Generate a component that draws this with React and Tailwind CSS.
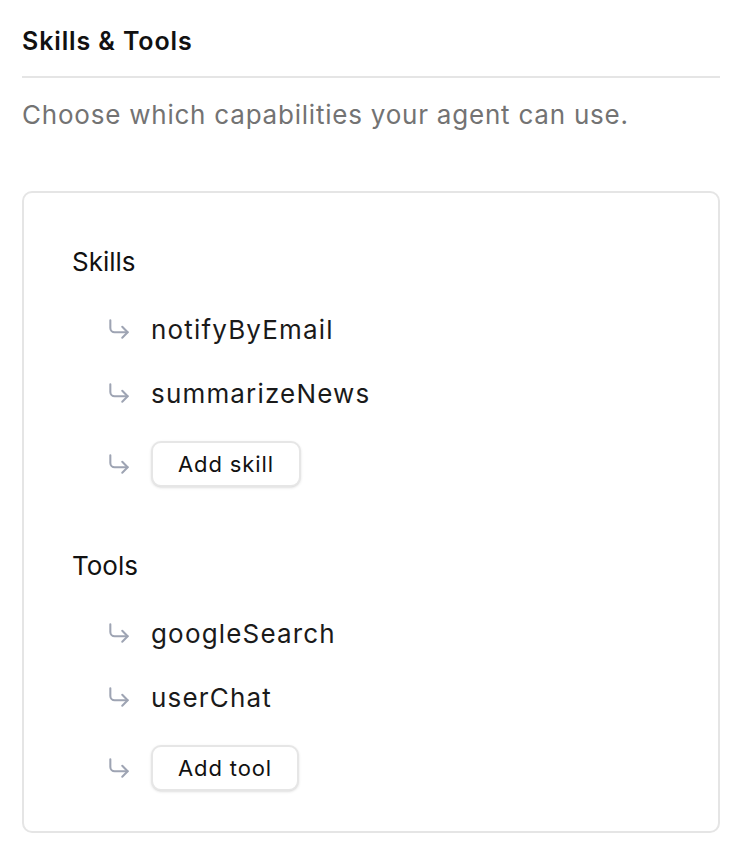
import React from "react";
import { CornerDownRight } from "lucide-react";

const sections = [
  { title: "Skills", items: ["notifyByEmail", "summarizeNews"], action: "Add skill" },
  { title: "Tools", items: ["googleSearch", "userChat"], action: "Add tool" },
];

const Arrow = () => (
  <CornerDownRight className="w-[26px] h-[26px] text-[#9ea4b3] shrink-0" strokeWidth={1.9} />
);

const Section = ({ title, items, action, className }) => (
  <div className={className}>
    <div className="h-[36px] leading-[36px] text-[26px] text-[#111]">{title}</div>
    <ul className="mt-[25px] pl-[34px]">
      {items.map((item, i) => (
        <li key={item} className={`flex items-center gap-[19px] h-[48px] ${i > 0 ? "mt-[16px]" : ""}`}>
          <Arrow />
          <span className="text-[26px] tracking-[0.045em] text-[#1a1a1a]">{item}</span>
        </li>
      ))}
      <li className="flex items-center gap-[19px] h-[46px] mt-[24px]">
        <Arrow />
        <button className="h-[46px] px-[25px] rounded-[10px] border-2 border-[#e6e6e6] bg-white shadow-sm text-[22px] tracking-[0.04em] text-[#111]">
          {action}
        </button>
      </li>
    </ul>
  </div>
);

export default function App() {
  return (
    <div className="min-h-screen bg-white pl-[22px] pr-[36px] pt-[23px] pb-8 font-['Inter',sans-serif]">
      <h2 className="h-[36px] leading-[36px] text-[25px] font-semibold tracking-[0.035em] text-[#111]">Skills &amp; Tools</h2>
      <div className="mt-[17px] border-t-2 border-[#e5e5e5]" />
      <p className="mt-[19px] h-[36px] leading-[36px] text-[26px] tracking-[0.03em] text-[#737373]">
        Choose which capabilities your agent can use.
      </p>

      <div className="mt-[58px] border-2 border-[#e5e5e5] rounded-[10px] pl-[48px] pt-[51px] pb-[40px]">
        <Section {...sections[0]} />
        <Section {...sections[1]} className="mt-[61px]" />
      </div>
    </div>
  );
}
